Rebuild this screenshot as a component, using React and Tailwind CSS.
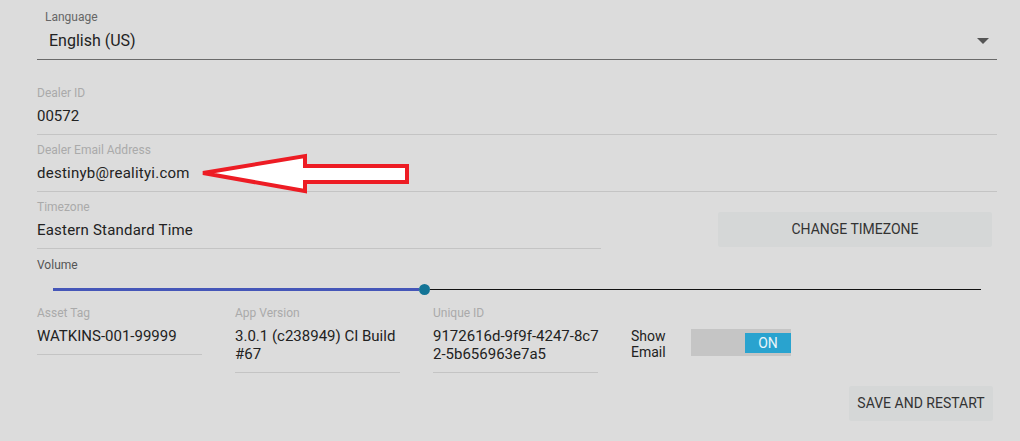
export default function App() {
  return (
    <div className="relative w-[1020px] h-[441px] overflow-hidden bg-[#dcdcdc] pl-[37px] pr-[23px] font-['Roboto',sans-serif] text-[#222]">
      {/* language */}
      <div className="h-[60px] border-b border-[#6a6a6a] flex flex-col">
        <div className="pt-[9px] pl-[8px] text-[12px] leading-[16px] text-[#666]">Language</div>
        <div className="mt-[5px] pl-[12px] flex items-center justify-between">
          <span className="text-[16px] leading-[22px] text-[#222]">English (US)</span>
          <svg width="12" height="6" viewBox="0 0 12 6" className="mr-[8px]">
            <polygon points="0,0 12,0 6,6" fill="#555" />
          </svg>
        </div>
      </div>

      <div className="h-[75px] border-b border-[#c4c4c4] pt-[25px]">
        <div className="text-[12px] leading-[16px] text-[#aaa]">Dealer ID</div>
        <div className="mt-[5px] text-[15px] leading-[20px]">00572</div>
      </div>

      <div className="h-[57px] border-b border-[#c4c4c4] pt-[7px]">
        <div className="text-[12px] leading-[16px] text-[#aaa]">Dealer Email Address</div>
        <div className="mt-[5px] text-[15px] leading-[20px] tracking-[0.25px]">destinyb@realityi.com</div>
      </div>

      <div className="flex">
        <div className="w-[564px] h-[57px] border-b border-[#c4c4c4] pt-[7px]">
          <div className="text-[12px] leading-[16px] text-[#aaa]">Timezone</div>
          <div className="mt-[5px] text-[15px] leading-[20px] tracking-[0.2px]">Eastern Standard Time</div>
        </div>
        <button className="ml-[117px] mt-[20px] w-[274px] h-[35px] bg-[#d5d7d7] rounded-[2px] text-[14px] text-[#333]">
          CHANGE TIMEZONE
        </button>
      </div>

      {/* volume */}
      <div className="pt-[8px] text-[12px] leading-[16px] text-[#555]">Volume</div>
      <div className="mt-[10px] h-[12px] pl-[16px] pr-[16px] flex items-center">
        <div className="w-[366px] h-[3px] bg-[#4556b8]" />
        <div className="w-[11px] h-[11px] rounded-full bg-[#137496]" />
        <div className="flex-1 h-px bg-[#111]" />
      </div>

      {/* info row */}
      <div className="mt-[10px] flex gap-[33px] items-start">
        <div className="w-[165px] border-b border-[#c4c4c4] pb-[9px]">
          <div className="text-[12px] leading-[16px] text-[#aaa]">Asset Tag</div>
          <div className="mt-[6px] text-[15px] leading-[18px]">WATKINS-001-99999</div>
        </div>
        <div className="w-[165px] border-b border-[#c4c4c4] pb-[9px]">
          <div className="text-[12px] leading-[16px] text-[#aaa]">App Version</div>
          <div className="mt-[6px] text-[15px] leading-[18px]">3.0.1 (c238949) CI Build #67</div>
        </div>
        <div className="w-[165px] border-b border-[#c4c4c4] pb-[9px]">
          <div className="text-[12px] leading-[16px] text-[#aaa]">Unique ID</div>
          <div className="mt-[6px] text-[15px] leading-[18px] whitespace-nowrap">
            <div>9172616d-9f9f-4247-8c7</div>
            <div>2-5b656963e7a5</div>
          </div>
        </div>
        <div className="flex items-start">
          <div className="w-[60px] mt-[23px] text-[14px] leading-[16px] text-[#222]">Show Email</div>
          <div className="mt-[24px] w-[100px] h-[27px] bg-[#c5c5c5] flex justify-end items-start pt-[4px]">
            <div className="w-[46px] h-[20px] bg-[#29a3cf] text-[#eaf6fa] text-[14px] leading-[20px] text-center">ON</div>
          </div>
        </div>
      </div>

      <div className="flex justify-end mt-[13px] pr-[4px]">
        <button className="w-[144px] h-[35px] bg-[#d5d7d7] rounded-[2px] text-[14px] text-[#333]">
          SAVE AND RESTART
        </button>
      </div>

      {/* annotation arrow */}
      <svg className="absolute left-[195px] top-[148px]" width="220" height="50" viewBox="0 0 220 50">
        <polygon
          points="8,25 110,8 110,18 212,18 212,34 110,34 110,43"
          fill="#ffffff"
          stroke="#ed1c24"
          strokeWidth="4"
          strokeLinejoin="miter"
        />
      </svg>
    </div>
  );
}
